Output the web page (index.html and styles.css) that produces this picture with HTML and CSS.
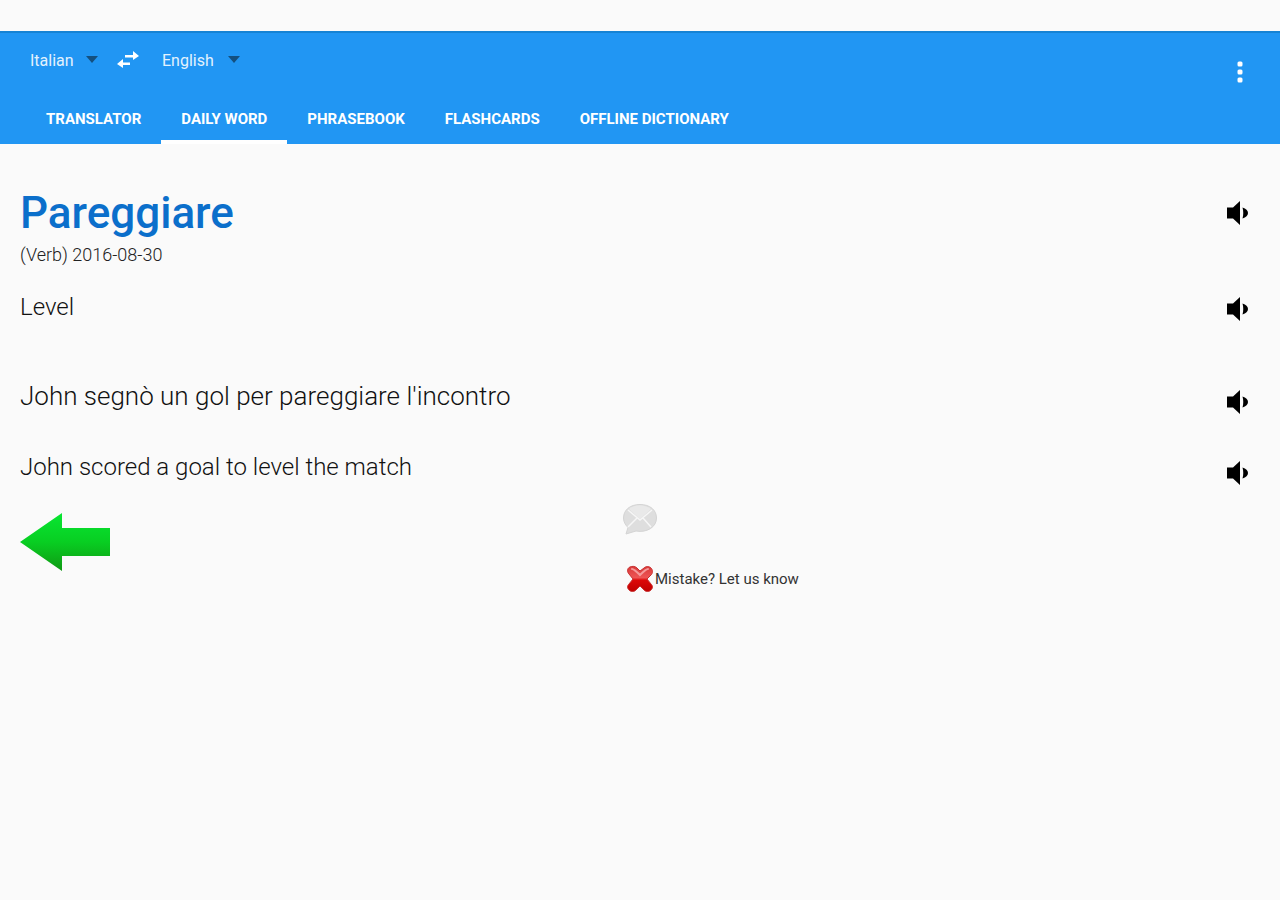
FILE: index.html
```html
<!DOCTYPE html>
<html lang="en">
<head>
    <meta charset="UTF-8">
    <meta name="viewport" content="width=device-width, initial-scale=1.0">
    <title>Daily Word</title>
    <link rel="stylesheet" href="styles.css">
</head>
<body>
    <svg width="0" height="0" class="sprites" aria-hidden="true">
        <symbol id="speaker" viewBox="0 0 24 26">
            <path d="M1 7.5h6L14 1v24l-7-6.500H1z"/>
            <path d="M16.500 7.500c3.500 1 5.500 3 5.500 5.500s-2 4.500-5.500 5.500c1-3.500 1-7.500 0-11z"/>
        </symbol>
        <symbol id="caret" viewBox="0 0 12 8">
            <path d="M0 0h12L6 7z"/>
        </symbol>
    </svg>

    <header class="app-bar">
        <div class="languages">
            <div class="language">
                <select class="from" aria-label="Translate from">
                    <option selected>Italian</option>
                    <option>English</option>
                </select>
                <svg class="caret"><use href="#caret"/></svg>
            </div>
            <button class="icon-btn swap" aria-label="Swap languages">
                <svg width="24" height="20" viewBox="0 0 24 20">
                    <path d="M9 5h8V1l6 5-6 4V7.500H9zM14 12.500H7V9l-6 5 6 4v-3h7z"/>
                </svg>
            </button>
            <div class="language">
                <select class="to" aria-label="Translate to">
                    <option>Italian</option>
                    <option selected>English</option>
                </select>
                <svg class="caret"><use href="#caret"/></svg>
            </div>
        </div>
        <button class="icon-btn more" aria-label="More options">
            <svg width="6" height="22" viewBox="0 0 6 22">
                <rect x="0.5" y="0.5" width="5" height="5" rx="1.5"/>
                <rect x="0.5" y="8.5" width="5" height="5" rx="1.5"/>
                <rect x="0.5" y="16.5" width="5" height="5" rx="1.5"/>
            </svg>
        </button>
        <nav class="tabs">
            <a href="#translator">TRANSLATOR</a>
            <a href="#daily" class="active" aria-current="page">DAILY WORD</a>
            <a href="#phrasebook">PHRASEBOOK</a>
            <a href="#flashcards">FLASHCARDS</a>
            <a href="#offline">OFFLINE DICTIONARY</a>
        </nav>
    </header>

    <main class="content">
        <div class="row word">
            <h1>Pareggiare</h1>
            <button class="icon-btn" aria-label="Listen to Pareggiare"><svg class="speaker"><use href="#speaker"/></svg></button>
        </div>
        <p class="info">(Verb) 2016-08-30</p>
        <div class="row translation">
            <p>Level</p>
            <button class="icon-btn" aria-label="Listen to Level"><svg class="speaker"><use href="#speaker"/></svg></button>
        </div>
        <div class="row example">
            <p class="original">John segnò un gol per pareggiare l'incontro</p>
            <button class="icon-btn" aria-label="Listen to the Italian example"><svg class="speaker"><use href="#speaker"/></svg></button>
        </div>
        <div class="row example">
            <p>John scored a goal to level the match</p>
            <button class="icon-btn" aria-label="Listen to the English example"><svg class="speaker"><use href="#speaker"/></svg></button>
        </div>

        <div class="actions">
            <button class="icon-btn previous" aria-label="Previous word">
                <svg width="92" height="60" viewBox="0 0 92 60">
                    <defs>
                        <linearGradient id="green" x1="0" y1="0" x2="0" y2="1">
                            <stop offset="0" stop-color="#08e632"/>
                            <stop offset="0.5" stop-color="#08ce22"/>
                            <stop offset="1" stop-color="#109914"/>
                        </linearGradient>
                    </defs>
                    <path d="M0 30L42 1v15h48v28H42v15z" fill="url(#green)"/>
                </svg>
            </button>
            <div class="feedback">
                <button class="icon-btn" aria-label="Comment">
                    <svg width="36" height="32" viewBox="0 0 36 32">
                        <path d="M18 1.500C8 1.500 1.500 7 1.500 15c0 4 2 7 4.500 9.500L4 31l10-3c11 2 20.500-4 20.500-13C34.500 7 28 1.500 18 1.500z" fill="#dedede" stroke="#d4d4d4"/>
                        <path d="M7 6l11 10L29 6C22 1 13 1 7 6z" fill="#e9e9e9"/>
                        <path d="M6 7l12 10L30 7M6 24l9-9M29 24l-8-9" fill="none" stroke="#f6f6f6" stroke-width="1.500"/>
                    </svg>
                </button>
                <button class="icon-btn mistake">
                    <svg width="26" height="28" viewBox="0 0 26 28">
                        <defs>
                            <linearGradient id="red" x1="0" y1="0" x2="0" y2="1">
                                <stop offset="0" stop-color="#d83a3a"/>
                                <stop offset="0.45" stop-color="#ee5555"/>
                                <stop offset="0.55" stop-color="#dc0808"/>
                                <stop offset="1" stop-color="#c00000"/>
                            </linearGradient>
                        </defs>
                        <path d="M3 2c2-1 5-1 7 1l3 3 4-3c2-2 5-2 7 0s2 5 0 7l-4 4 4 5c2 2 2 4 0 6s-5 2-7 0l-4-4-4 4c-2 2-5 2-7 0s-2-4 0-6l4-5-4-5C0 7 0 3 3 2z" fill="url(#red)" stroke="#c83030"/>
                        <path d="M5 4c2 0 4 2 8 6 4-4 6-6 8-6" fill="none" stroke="#f59a9a" stroke-width="2" stroke-linecap="round"/>
                    </svg>
                    <span>Mistake? Let us know</span>
                </button>
            </div>
        </div>
    </main>
</body>
</html>
```
FILE: styles.css
```css
* {
    box-sizing: border-box;
}
body {
    margin: 0;
    padding-top: 31px;
    background: #fafafa;
    color: #111;
    font-family: Roboto, "Liberation Sans", sans-serif;
}
h1, p {
    margin: 0;
}
svg {
    display: block;
    flex-shrink: 0;
}
.sprites {
    position: absolute;
}
.icon-btn {
    display: block;
    padding: 0;
    border: none;
    background: none;
    font-family: inherit;
    cursor: pointer;
}

/* Header */
.app-bar {
    display: grid;
    grid-template-columns: 1fr auto;
    height: 113px;
    background: #2196f3;
    border-top: 2px solid #1683d4;
    color: white;
}
.languages {
    display: flex;
    align-items: center;
    height: 54px;
    padding-left: 30px;
}
.language {
    display: grid;
    align-items: center;
}
.language select,
.language .caret {
    grid-area: 1 / 1;
}
.language select {
    appearance: none;
    height: 32px;
    padding: 0;
    border: none;
    background: none;
    color: #e3f2fd;
    font-family: inherit;
    font-size: 16px;
}
.language option {
    color: #2b2b2b;
}
.from {
    width: 68px;
}
.to {
    width: 78px;
}
.caret {
    justify-self: end;
    width: 12px;
    height: 8px;
    fill: #14507f;
    pointer-events: none;
}
.swap {
    margin: 0 22px 0 18px;
    fill: white;
}
.more {
    grid-area: 1 / 2 / 3 / 3;
    align-self: start;
    padding: 28px 37px;
    fill: white;
}
.tabs {
    display: flex;
    align-self: end;
    height: 52px;
    padding-left: 26px;
}
.tabs a {
    padding: 6px 20px 0;
    border-bottom: 4px solid transparent;
    color: white;
    font-size: 15px;
    font-weight: 700;
    line-height: 42px;
    text-decoration: none;
    white-space: nowrap;
}
.tabs .active {
    border-color: white;
}

/* Daily word */
.content {
    padding: 40px 30px 40px 20px;
}
.row {
    display: flex;
    justify-content: space-between;
    align-items: center;
    font-size: 24px;
    font-weight: 300;
}
.speaker {
    width: 24px;
    height: 26px;
    fill: black;
}
.word {
    height: 58px;
}
h1 {
    color: #0b6fcb;
    font-size: 44px;
    font-weight: 500;
}
.info {
    color: #222;
    font-size: 18px;
    font-weight: 300;
    line-height: 26px;
}
.translation {
    height: 82px;
    margin-bottom: 10px;
}
.translation p {
    padding-bottom: 4px;
}
.example {
    height: 71px;
}
.example .icon-btn {
    padding-top: 12px;
}
.original {
    font-size: 26px;
}
.actions {
    display: grid;
    grid-template-columns: 1fr 36px 1fr;
    margin-right: -10px;
}
.previous {
    place-self: start;
    padding-top: 10px;
}
.feedback {
    display: flex;
    flex-direction: column;
    gap: 30px;
    padding-top: 1px;
}
.mistake {
    display: flex;
    align-items: center;
    gap: 2px;
    padding-left: 5px;
    color: #333;
    font-size: 15px;
    white-space: nowrap;
}
```
